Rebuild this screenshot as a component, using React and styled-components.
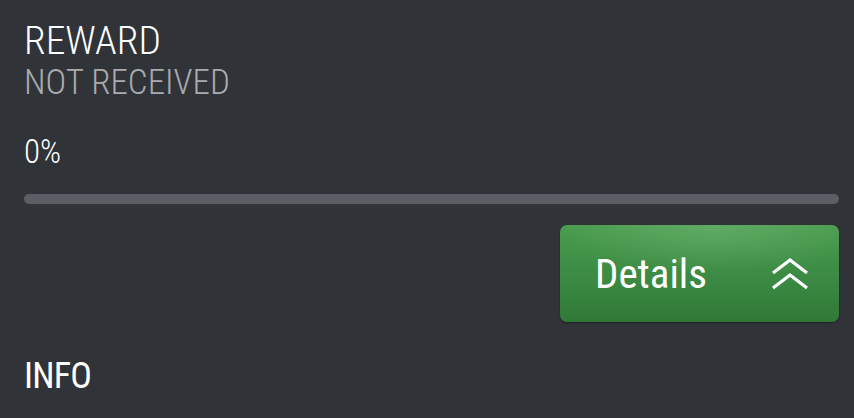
import styled, { createGlobalStyle } from 'styled-components';

const GlobalStyle = createGlobalStyle`
  html, body {
    margin: 0;
    padding: 0;
    background: #303338;
  }
  body {
    font-family: Roboto, "Liberation Sans", sans-serif;
    font-stretch: 80%;
    color: #ffffff;
  }
`;

const Screen = styled.div`
  width: 854px;
  height: 418px;
  box-sizing: border-box;
  padding: 20px 15px 0 24px;
  display: flex;
  flex-direction: column;
  overflow: hidden;
`;

const Title = styled.div`
  font-size: ${props => props.muted ? '35px' : '39.5px'};
  font-weight: 300;
  line-height: 42px;
  color: ${props => props.muted ? '#a9abaf' : '#ffffff'};
`;

const Percent = styled.div`
  margin-top: 28px;
  font-size: 33px;
  font-weight: 300;
  line-height: 40px;
`;

const Track = styled.div`
  margin-top: 22px;
  height: 10px;
  border-radius: 5px;
  background: #5b5e64;
  overflow: hidden;
`;

const Fill = styled.div`
  height: 100%;
  background: #4c9a52;
`;

const ButtonRow = styled.div`
  margin-top: 21px;
  display: flex;
  justify-content: flex-end;
`;

const DetailsButton = styled.button`
  width: 279px;
  height: 97px;
  box-sizing: border-box;
  border: none;
  border-radius: 7px;
  padding: 0 30px 0 35px;
  display: flex;
  align-items: center;
  justify-content: space-between;
  color: #ffffff;
  font-family: Roboto, "Liberation Sans", sans-serif;
  font-stretch: 80%;
  font-size: 41px;
  font-weight: 400;
  background:
    radial-gradient(ellipse 55% 50% at 55% 0%, rgba(130, 195, 130, 0.4), rgba(130, 195, 130, 0) 100%),
    linear-gradient(#4a9c50, #2f7a37);
  box-shadow: 0 1px 2px rgba(0, 0, 0, 0.4);
  cursor: pointer;
`;

const Section = styled.div`
  margin-top: 33px;
  font-size: 36px;
  font-weight: 400;
  letter-spacing: -0.8px;
  line-height: 42px;
`;

function ChevronsUp() {
  return (
    <svg width="38" height="32" viewBox="0 0 38 32" fill="none" stroke="#ffffff" strokeWidth="3.2">
      <polyline points="2,15 19,2 36,15" />
      <polyline points="2,30 19,17 36,30" />
    </svg>
  );
}

export default function App() {
  const progress = 0;
  return (
    <Screen>
      <GlobalStyle />
      <Title>REWARD</Title>
      <Title muted>NOT RECEIVED</Title>
      <Percent>{progress}%</Percent>
      <Track>
        <Fill style={{ width: `${progress}%` }} />
      </Track>
      <ButtonRow>
        <DetailsButton>
          Details
          <ChevronsUp />
        </DetailsButton>
      </ButtonRow>
      <Section>INFO</Section>
    </Screen>
  );
}
